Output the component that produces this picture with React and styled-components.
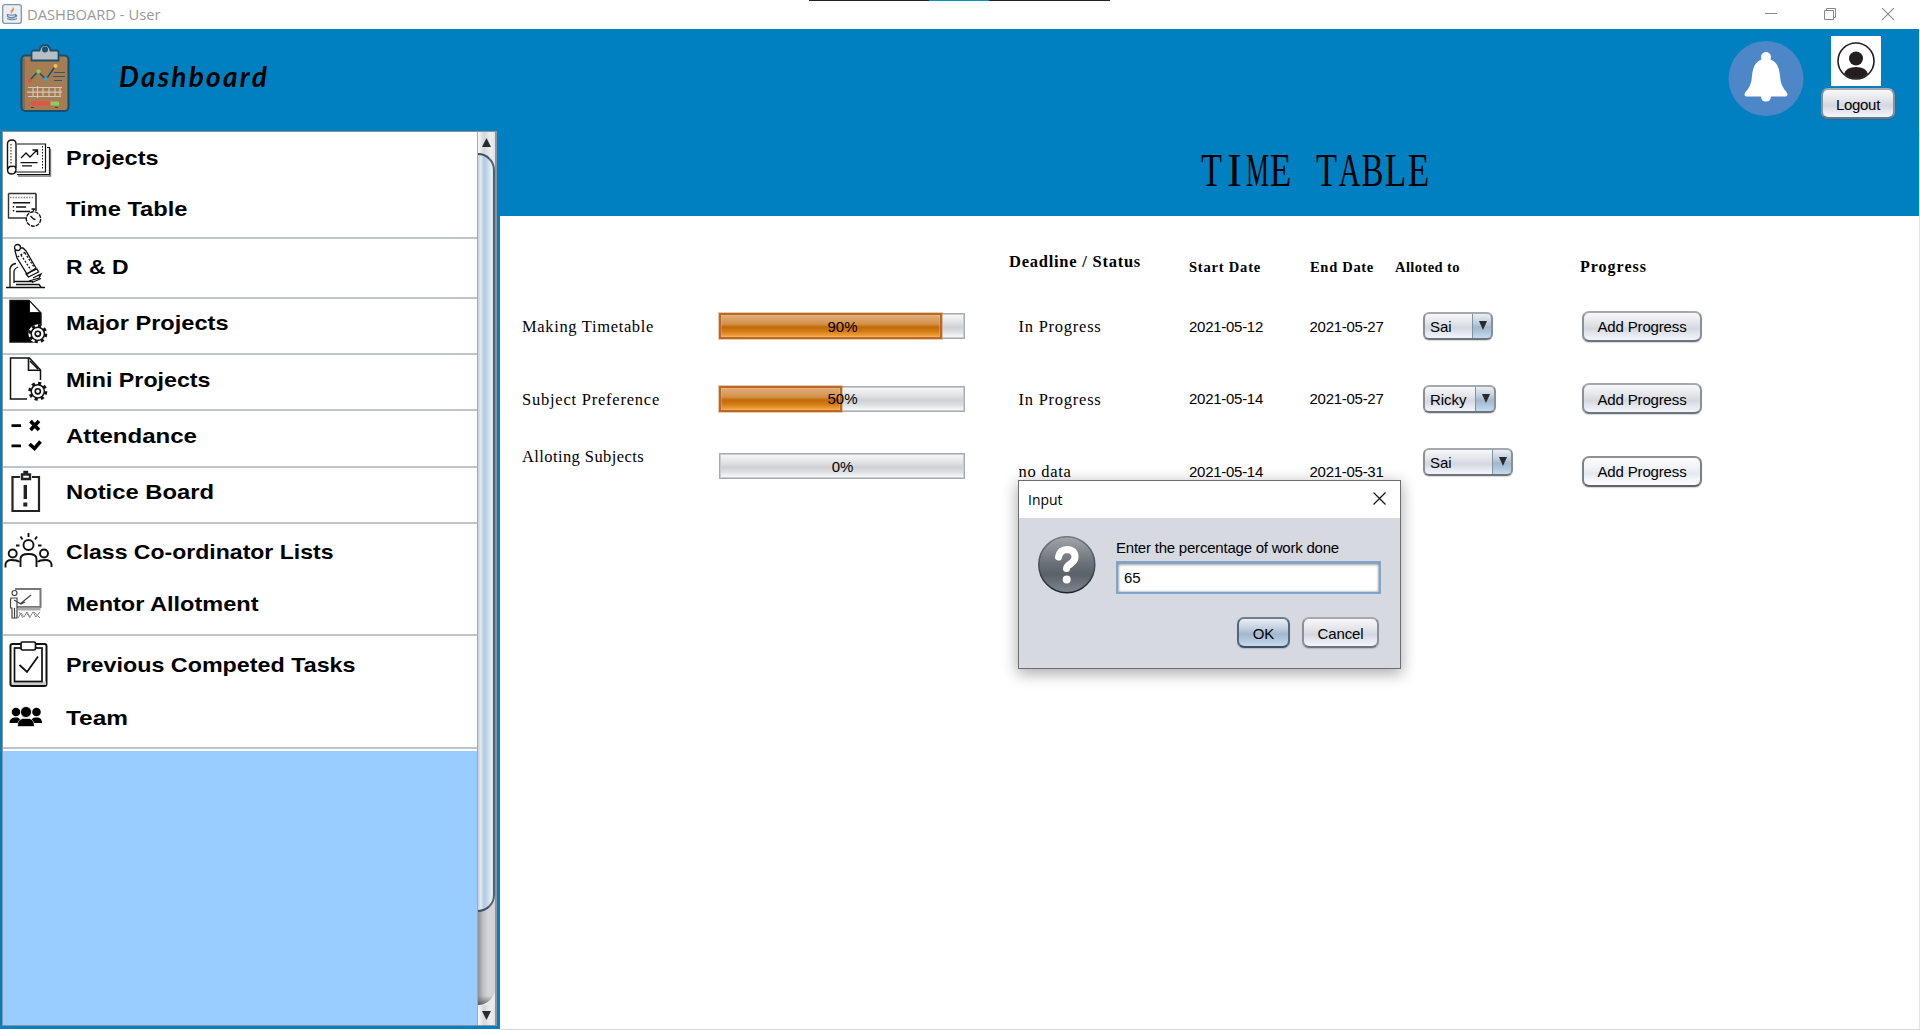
import React, { useLayoutEffect, useRef } from "react";
import styled, { createGlobalStyle, css } from "styled-components";

const Global = createGlobalStyle`
  * { box-sizing: border-box; }
  body { margin: 0; background: #fff; overflow: hidden; }
`;

const SANS = '"Liberation Sans", Arial, sans-serif';
const SERIF = '"Liberation Serif", "Times New Roman", serif';
const UI = '"Open Sans", "Noto Sans", sans-serif';

/* A label that fills a fixed width, by tracking or by stretching its glyphs. */
const FitBox = styled.span`
  display: block;
  flex: none;
  width: ${(p) => p.$w}px;
  white-space: pre;
`;
const FitText = styled.span`
  display: inline-block;
  transform-origin: 0 50%;
`;
function Fit({ w, stretch, children }) {
  const ref = useRef(null);
  useLayoutEffect(() => {
    const el = ref.current;
    el.style.letterSpacing = "0px";
    el.style.transform = "none";
    const natural = el.getBoundingClientRect().width;
    if (stretch) el.style.transform = `scaleX(${w / natural})`;
    else el.style.letterSpacing = `${(w - natural) / children.length}px`;
  }, [w, stretch, children]);
  return (
    <FitBox $w={w}>
      <FitText ref={ref}>{children}</FitText>
    </FitBox>
  );
}

const Window = styled.div`
  position: relative;
  width: 1920px;
  height: 1030px;
  display: flex;
  flex-direction: column;
  overflow: hidden;
  background: #fff;
  color: #000;
  font-family: ${SANS};
  font-size: 15px;
`;

/* Title bar */
const TitleBar = styled.header`
  flex: none;
  height: 29px;
  display: flex;
  align-items: center;
  padding: 0 26px 2px 2px;
  color: #999;
  font: 15px/20px ${UI};
`;
const TitleText = styled.div`
  margin-left: 5px;
  flex: 1;
`;
const WindowButtons = styled.div`
  display: flex;
  gap: 46.5px;
  align-items: center;
`;
const TopStrip = styled.div`
  position: absolute;
  top: 0;
  left: 809px;
  width: 301px;
  height: 1px;
  background: linear-gradient(90deg, #222 120px, #0099bc 120px, #0099bc 180px, #222 180px);
`;

/* Blue header */
const Banner = styled.div`
  flex: none;
  height: 102px;
  margin-right: 1px;
  display: flex;
  background: #0080c0;
`;
const Brand = styled.div`
  flex: 1;
  display: flex;
  padding: 14px 0 0 17px;
`;
const BrandName = styled.h1`
  margin: 14px 0 0 48px;
  font: italic 700 28px/38px Lato, sans-serif;
`;
const Bell = styled.div`
  padding-top: 12px;
`;
const Account = styled.div`
  display: flex;
  flex-direction: column;
  align-items: flex-start;
  gap: 2px;
  padding: 7px 24px 0 17px;
`;
const AvatarSlot = styled.div`
  height: 50px;
  margin-left: 10px;
`;

/* Nimbus style controls */
const gray = css`
  background: linear-gradient(#f7f8fa 0, #e4e6ea 35%, #d4d7dd 58%, #e2e5eb 75%, #f2f5fb 100%);
  border-color: #a5a9af #8b9098 #6e747c;
`;
const light = css`
  background: linear-gradient(#fdfdfe 0, #f1f3f6 35%, #e5e8ee 58%, #f0f3f8 75%, #fcfdff 100%);
  border-color: #8c9096 #7b8088 #5e646c;
`;
const blue = css`
  background: linear-gradient(#e9eff5 0, #c1cfde 35%, #a3b8cd 56%, #afc5da 75%, #c4dbf0 100%);
  border-color: #6d7c8b #52667c #3c4f65;
`;
const Button = styled.button`
  flex: none;
  width: ${(p) => p.$w}px;
  height: 31px;
  display: flex;
  align-items: center;
  justify-content: center;
  border: 2px solid;
  border-radius: 7px;
  color: #000;
  font: 15px/20px ${SANS};
  padding: 2px 0 0;
  box-shadow: 0 1px 1px rgba(60, 70, 90, 0.22);
  ${(p) => (p.$tone === "blue" ? blue : p.$tone === "light" ? light : gray)}
`;

/* Body */
const Body = styled.div`
  flex: 1;
  display: flex;
  min-height: 0;
`;
const Sidebar = styled.aside`
  flex: none;
  width: 500px;
  padding: 0 3px 3px 2px;
  background: #0080c0;
  height: 898px;
`;
const ScrollPane = styled.div`
  height: 895px;
  display: flex;
  border: 1px solid #8d939d;
  border-right-width: 2px;
`;
const Menu = styled.nav`
  width: 474px;
  background: #99ccff;
`;
const Section = styled.div`
  height: ${(p) => p.$h}px;
  background: #fff;
  border-bottom: 2px solid #bfc4ca;
`;
const MenuEnd = styled.div`
  height: 2px;
  background: #fff;
`;
const Item = styled.a`
  display: flex;
  align-items: center;
  gap: 11.4px;
  height: ${(p) => p.$h}px;
  font: 700 21px/24px ${SANS};
`;
const IconSvg = styled.svg`
  flex: none;
  width: 52px;
  height: 48px;
  overflow: visible;
  fill: none;
  stroke: #111;
  stroke-width: 1.4;
`;

/* Scroll bar */
const ScrollBar = styled.div`
  flex: 1;
  display: flex;
  flex-direction: column;
  border-left: 1px solid #a4a9b2;
  background: linear-gradient(90deg, #9b9ca2, #c4c5cb 30%, #d4d5da 60%, #d2d3d8);
`;
const Arrow = styled.div`
  height: ${(p) => p.$h}px;
  display: flex;
  justify-content: center;
  align-items: ${(p) => (p.$down ? "flex-end" : "flex-start")};
  padding: ${(p) => (p.$down ? "0 0 5px" : "6px 0 0")};
  background: linear-gradient(90deg, #fafafb, #d4d6d9 35%, #eceef0 75%, #e0e3e6);
`;
const ThumbWell = styled.div`
  background: linear-gradient(90deg, #ececef, #d4d6d9 35%, #eceef0 75%, #e0e3e6) top / 100% 20px no-repeat;
`;
const Thumb = styled.div`
  height: 759px;
  border: solid #3e5063;
  border-width: 2px 2px 2px 0;
  border-right-color: #53626c;
  border-radius: 0 17px 17px 0;
  background: linear-gradient(90deg, #c5cfda, #e3ebf3 18%, #b3c8df 40%, #c5d7e8 62%, #e0f1fb 88%, #d2e4ea);
`;
const TrackRest = styled.div`
  flex: 1;
  display: flex;
  align-items: flex-end;
  background: linear-gradient(#e8eaec, #e8eaec) bottom / 100% 12px no-repeat;
`;
const TrackEnd = styled.div`
  flex: 1;
  height: 100%;
  border-radius: 0 0 17px 0;
  background:
    linear-gradient(transparent, rgba(70, 70, 75, 0.75)) left bottom / 100% 9px no-repeat,
    linear-gradient(90deg, #8e8f94, #bfc0c6 30%, #d4d5da 60%, #d2d3d8);
`;

/* Main area */
const Main = styled.main`
  flex: 1;
  display: flex;
  flex-direction: column;
  border-bottom: 1px solid #d6d9df;
  border-right: 1px solid #e2e4e8;
`;
const PageTitle = styled.h2`
  flex: none;
  height: 85px;
  margin: 0;
  padding: 12px 0 0 700px;
  display: flex;
  background: #0080c0;
  font: 400 47px/55px ${SERIF};
  white-space: pre;
`;
const Letter = styled.span`
  width: 23px;
  display: flex;
  justify-content: center;
  transform: scaleX(${(p) => p.$k});
`;
const Row = styled.div`
  display: grid;
  grid-template-columns: 218px 300px 171px 120.5px 113.5px 159px 1fr;
  height: ${(p) => p.$h}px;
`;
const Cell = styled.div`
  display: flex;
  align-items: center;
  padding: ${(p) => (p.$serif && !p.$up ? 2 : 0)}px 0 ${(p) => (p.$up || 0) * 2}px ${(p) => p.$in || 0}px;
  font-family: ${(p) => (p.$serif ? SERIF : SANS)};
  font-size: ${(p) => (p.$serif ? 16.5 : 15)}px;
  line-height: 20px;
`;
const DateCell = styled(Cell)`
  padding-top: 1px;
`;
const Heads = styled.div`
  display: flex;
  height: 74px;
  padding-left: 509px;
  align-items: flex-start;
`;
const Head = styled.div`
  width: ${(p) => p.$w}px;
  padding-top: ${(p) => p.$top}px;
  font: 700 ${(p) => p.$size}px/20px ${SERIF};
`;
const Bar = styled.div`
  display: grid;
  width: 246px;
  height: 26px;
  border: 1px solid #a9abb3;
  box-shadow: inset 0 0 0 1px #c9cbd2;
  background: linear-gradient(#fafafa 0, #dfe0e3 38%, #cfd0d4 55%, #dddfe2 75%, #f3f4f6 92%, #fff 100%);
`;
const Fill = styled.div`
  grid-area: 1 / 1;
  margin: -1px;
  border: 2px solid #b9682c;
  box-shadow: 0 0 0 1px rgba(205, 120, 50, 0.4), inset 0 0 0 1px rgba(255, 190, 110, 0.35);
  background: linear-gradient(#e0ae7c 0, #d4924c 40%, #c26a05 55%, #d47d18 75%, #f9a941 100%);
`;
const BarText = styled.span`
  grid-area: 1 / 1;
  place-self: center;
  padding: 1px 0 0 1px;
`;
const Select = styled.div`
  width: ${(p) => p.$w}px;
  height: 28px;
  display: flex;
  border: 2px solid;
  border-radius: 6px;
  overflow: hidden;
  box-shadow: 0 1px 1px rgba(60, 70, 90, 0.2);
  ${gray}
`;
const SelectValue = styled.div`
  flex: 1;
  padding: 3px 0 0 5px;
`;
const SelectArrow = styled.div`
  width: 21px;
  margin: -2px -2px -2px 0;
  padding: 7px 0 0 6px;
  border: solid;
  border-width: 2px 2px 2px 1px;
  border-radius: 0 6px 6px 0;
  line-height: 0;
  ${blue}
  border-left-color: #8093a6;
`;

/* Dialog */
const Dialog = styled.div`
  position: absolute;
  left: 1018px;
  top: 480px;
  width: 383px;
  height: 189px;
  border: 1px solid #6e6e6e;
  background: #d6d9e0;
  box-shadow: 0 4px 14px 1px rgba(0, 0, 0, 0.32);
`;
const DialogTitle = styled.div`
  height: 37px;
  display: flex;
  justify-content: space-between;
  align-items: center;
  padding: 0 14px 2px 9px;
  background: #fff;
  font: 15px/20px ${UI};
`;
const DialogBody = styled.div`
  display: flex;
  gap: 20px;
  padding: 18px 19px 0 19px;
`;
const Prompt = styled.div`
  padding-top: 2px;
  line-height: 20px;
`;
const Input = styled.div`
  width: 265px;
  height: 33px;
  margin-top: 3px;
  padding: 6px 0 0 6px;
  border: 2px solid #77a3cd;
  outline: 1px solid rgba(140, 175, 210, 0.45);
  outline-offset: -1px;
  background: #fff;
  box-shadow: inset 0 2px 3px rgba(60, 60, 70, 0.4), inset 0 0 2px 1px rgba(90, 100, 120, 0.35);
`;
const DialogButtons = styled.div`
  display: flex;
  gap: 12px;
  justify-content: flex-end;
  padding: 23px 21px 0 0;
`;

const Gear = ({ x, y }) => (
  <g>
    <circle cx={x} cy={y} r="9.5" fill="#fff" stroke="none" />
    <circle cx={x} cy={y} r="8" stroke="#111" strokeWidth="3" strokeDasharray="3.1 3.183" />
    <circle cx={x} cy={y} r="6.6" fill="#fff" stroke="#111" strokeWidth="1.5" />
    <circle cx={x} cy={y} r="2.6" strokeWidth="1.6" />
  </g>
);

const icons = {
  projects: (
    <>
      <path d="M14 40.500H46.500V13.500H44M11 38H42.500V10H14" strokeWidth="1.200" />
      <path d="M15 42H47.500V15" stroke="#777" />
      <path d="M4.500 32V10q0-4 4.500-4q4 0 4 4V34M4.500 32v4q0 4 4.500 4q4 0 4-5q-1-4-4-2.500q-3-1-4.500 3.500" />
      <path d="M8 10V30M39.500 12V36" strokeDasharray="1.500 1.500" strokeWidth="1" />
      <path d="M18 24l5-5l4 4l7-7M29.500 16h5v5" />
      <path d="M17.500 28.700H34.500M19 31.800H29" strokeWidth="1.300" />
    </>
  ),
  timetable: (
    <>
      <path d="M5.500 8.500V33H25M33 8.500H5.500" stroke="#333" />
      <path d="M33 8.500V26" />
      <path d="M7 12.500H31" strokeDasharray="1.500 1.200" stroke="#888" />
      <path d="M11 17.800H27M13 22H23M13 26.500H27" strokeWidth="1.500" />
      <path d="M10.500 17v10" strokeDasharray="1.500 2.500" />
      <circle cx="30.500" cy="34" r="7.200" fill="#fff" strokeDasharray="4 1" />
      <path d="M30.500 34l-3-3M30.500 34l2 .5M30.500 26v-2M28.500 24h4" />
    </>
  ),
  microscope: (
    <g strokeWidth="1.300">
      <path d="M3 44.500H42M7 44V26q1-5 6-5.500M11 40V28q1-3 4-4M11 38.500H30M13 41.500H36L38 44" />
      <path d="M12 8l3-3h5l3 3L33 25l-9 6L14 15z" />
      <path d="M18 12L28 27M22 10L31 24M14.500 14l8-5" strokeDasharray="2 1.500" />
      <circle cx="14.500" cy="4.500" r="3" fill="#fff" />
      <path d="M23 31l11-5l1.500 3l-10 5zM26 38l10-3l2-4l-8 4M29 39.500l9-4" />
    </g>
  ),
  major: (
    <>
      <path d="M7 1.500H26L38 14V43H7z" fill="#000" />
      <path d="M26.500 2V13.500H37z" fill="#fff" strokeWidth="1" />
      <Gear x={34.8} y={34.8} />
    </>
  ),
  mini: (
    <>
      <path d="M24 43H7.500V2H26.500L37.500 14V24" strokeWidth="1.500" />
      <path d="M25.500 2V14.200H37.500M27 5L35 13" strokeWidth="1.600" />
      <Gear x={34.8} y={35.3} />
    </>
  ),
  attendance: (
    <g stroke="#000">
      <path d="M8.500 13.700H18M8.500 33.800H18" strokeWidth="2.800" />
      <path d="M27.500 9l8.500 9M36 9l-8.500 9M26.500 32l5 4.500l6-7" strokeWidth="3.600" />
    </g>
  ),
  notice: (
    <g stroke="#222">
      <path d="M17 9H9.500V43H36V9H29" strokeWidth="2.200" />
      <path d="M19 11V6.500h2.500V4h2.500v2.500H27V11z" strokeWidth="2.400" />
      <path d="M22.300 17V31" strokeWidth="3.400" />
      <path d="M22.300 34.500V38.500" strokeWidth="4" />
    </g>
  ),
  coordinator: (
    <g strokeWidth="1.900">
      <circle cx="25.500" cy="17" r="5" />
      <circle cx="9.700" cy="25.500" r="4" />
      <circle cx="41" cy="25.500" r="4" />
      <path d="M17.500 39V31q0-5 8-5t8 5v8M2.500 39.500V36q1-4 6-4q6 0 7.500 2M48.500 39V36q-1-4-6-4q-6 0-7.500 2" />
      <path d="M25.500 5v4M17.500 8.500l2 3M34 8.500l-2 3M13 17.500h3.500M35 17.500h3.500" />
    </g>
  ),
  mentor: (
    <g stroke="#444" strokeWidth="1.200">
      <path d="M12 9H37.500V27H14" stroke="#777" strokeWidth="2" />
      <path d="M17 24l11-9M11 20l7 4l4-2" />
      <circle cx="11.500" cy="13" r="2.500" />
      <path d="M8 18h6v20H9V28H7.500V20zM11.500 28v10" />
      <path d="M15 29H37.500" stroke="#aaa" strokeWidth="3" />
      <path d="M15 38l3-5l3 4l3-5l3 5l3-5l3 5l4-5M16 32l4 6M23 32l4 6M31 32l6 6" stroke="#888" strokeWidth="1" />
    </g>
  ),
  tasks: (
    <>
      <rect x="7.500" y="3" width="36" height="42" rx="2" fill="#fff" strokeWidth="2" />
      <path d="M9 43H42V41.500H11" stroke="#ccc" strokeWidth="2.200" />
      <rect x="11.500" y="7" width="27.500" height="33.500" strokeWidth="1.700" />
      <rect x="18" y="1" width="14.500" height="8" rx="1.500" fill="#fff" strokeWidth="1.700" />
      <path d="M16.500 24l7.500 7L35 15.500" strokeWidth="1.800" />
    </>
  ),
  team: (
    <g fill="#000" stroke="none">
      <circle cx="13" cy="18" r="4.300" />
      <circle cx="33.500" cy="18" r="4.300" />
      <path d="M6.500 29q0-5 5-5.500h3q3 1 4 5.500zM28 29q0-5 4-5.500h3q4 .5 4 5.500z" />
      <circle cx="23" cy="18" r="5.500" stroke="#fff" strokeWidth=".8" />
      <path d="M14.500 32.500q0-7 5-8h7q4.500 1 5 8z" stroke="#fff" strokeWidth=".6" />
    </g>
  ),
};

const sections = [
  { h: 107, items: [["projects", "Projects", 52, 92.5], ["timetable", "Time Table", 50, 121.5]] },
  { h: 60, items: [["microscope", "R & D", 56, 62.5]] },
  { h: 56, items: [["major", "Major Projects", 48, 162.5]] },
  { h: 56, items: [["mini", "Mini Projects", 49, 144.5]] },
  { h: 57, items: [["attendance", "Attendance", 50, 131]] },
  { h: 56, items: [["notice", "Notice Board", 48, 148]] },
  { h: 112, items: [["coordinator", "Class Co-ordinator Lists", 56, 267.5], ["mentor", "Mentor Allotment", 48, 192.5]] },
  { h: 113, items: [["tasks", "Previous Competed Tasks", 57, 289.5], ["team", "Team", 49, 62]] },
];

const rows = [
  { h: 72, task: "Making Timetable", tw: 132, pct: 90, status: "In Progress", sw: 83, start: "2021-05-12", end: "2021-05-27", who: "Sai", cw: 70 },
  { h: 73, task: "Subject Preference", tw: 138, pct: 50, status: "In Progress", sw: 83, start: "2021-05-14", end: "2021-05-27", who: "Ricky", cw: 73 },
  { h: 72, task: "Alloting Subjects", tw: 122, pct: 0, status: "no data", sw: 53, start: "2021-05-14", end: "2021-05-31", who: "Sai", cw: 90, taskUp: 14, barUp: 5, selUp: 9, tone: "light" },
];

const nameWidth = { Sai: 21.5, Ricky: 36.5 };

const title = [["T", 0.73], ["I", 0.92], ["M", 0.55], ["E", 0.75], [" ", 1], ["T", 0.73], ["A", 0.64], ["B", 0.7], ["L", 0.75], ["E", 0.75]];

const JavaIcon = () => (
  <svg width="20" height="20" viewBox="0 0 20 20">
    <rect x=".7" y=".7" width="18.600" height="18.600" rx="2" fill="#e9eff4" stroke="#8197ab" strokeWidth="1.300" />
    <path d="M10 10q-3-2.500 0-4.500q1-1 .5-2.500q3 2 .5 4q-1.500 1.500-1 3" fill="#ef8d3c" />
    <path d="M5.500 10.500q4 1.500 8 0v2q-4 2-8 0zM13.500 11q2.500 0 0 2M5 14.500q5 2.500 10 0M6.500 13.500q3 1 6 0" fill="none" stroke="#5f86a8" strokeWidth="1.200" />
  </svg>
);

const Clipboard = () => (
  <svg width="54" height="72" viewBox="0 0 54 72">
    <rect x="4.500" y="12.500" width="47" height="55.500" rx="4" fill="#a67c52" stroke="#17506f" strokeWidth="2.200" />
    <path d="M7 15V66" stroke="#8d6a4b" strokeWidth="2" />
    <path d="M14.500 17.500V9.500q0-2 2-2h6q1-5.500 5.500-5.500T33.500 7.500h6q2 0 2 2v8z" fill="#b9bec5" stroke="#17506f" strokeWidth="1.800" />
    <circle cx="28" cy="6.500" r="3" fill="#17506f" />
    <path d="M13 37l8-8.500l8 8l9-13" fill="none" stroke="#1f4f70" strokeWidth="1.500" />
    <circle cx="13" cy="37.500" r="2" fill="#e84c4c" />
    <circle cx="21.500" cy="28.500" r="2.200" fill="#8cc95c" />
    <circle cx="29" cy="36" r="2" fill="#3fa2df" />
    <circle cx="38.500" cy="23" r="2" fill="#f6c14b" />
    <path d="M37 29.500H48M36 33.500H48M37 37.500H45" stroke="#2c5873" strokeWidth="1.200" />
    <path d="M11 44.500H45M10 49.200H45M11 53.500H44M16 44v10M20.500 43v12M26 44v10M32 44v10M38 44v10M43 44v10" stroke="#d0c6ba" strokeWidth="1.200" />
    <rect x="13.500" y="58.500" width="20" height="4" fill="#e8504c" />
    <rect x="33.500" y="58.500" width="8.500" height="4" fill="#93c863" />
    <path d="M14 64.500h3M38 64.500h3" stroke="#17506f" strokeWidth="1.200" />
  </svg>
);

const BellIcon = () => (
  <svg width="76" height="76" viewBox="0 0 76 76">
    <circle cx="38" cy="37.500" r="37.500" fill="#4d87c7" />
    <circle cx="38" cy="16" r="5" fill="#fff" />
    <path d="M38 17q13 2 14 18q.5 10 6.500 16q2.500 4-1 4.500h-39q-3.500-.5-1-4.500q6-6 6.500-16q1-16 14-18z" fill="#fff" />
    <path d="M33 55h10q0 5.500-5 5.500t-5-5.500z" fill="#fff" />
  </svg>
);

const Avatar = () => (
  <svg width="50" height="50" viewBox="0 0 50 50">
    <defs>
      <clipPath id="ring"><circle cx="25" cy="25" r="17.500" /></clipPath>
    </defs>
    <rect width="50" height="50" fill="#fff" />
    <g clipPath="url(#ring)" fill="#231f20">
      <circle cx="25" cy="22.500" r="7" />
      <path d="M13 45V38q2-7 12-7t12 7v7z" />
    </g>
    <circle cx="25" cy="25" r="18" fill="none" stroke="#231f20" strokeWidth="1.600" />
  </svg>
);

const Question = () => (
  <svg width="58" height="58" viewBox="0 0 58 58">
    <defs>
      <linearGradient id="ball" x1="0" y1="0" x2="0" y2="1">
        <stop offset="0" stopColor="#a3a6aa" />
        <stop offset=".5" stopColor="#686e75" />
        <stop offset=".68" stopColor="#5a6169" />
        <stop offset="1" stopColor="#7d868f" />
      </linearGradient>
      <linearGradient id="rim" x1="0" y1="0" x2="0" y2="1">
        <stop offset="0" stopColor="#777b80" />
        <stop offset="1" stopColor="#1c242c" />
      </linearGradient>
    </defs>
    <circle cx="28.800" cy="28.700" r="28" fill="url(#ball)" stroke="url(#rim)" strokeWidth="1.500" />
    <path d="M20.500 21q1.500-7.500 8.500-7.500q8 .5 8 7.500q0 3.500-4 6.500q-4.500 3-4.500 5" fill="none" stroke="#fff" strokeWidth="7" strokeLinecap="round" strokeLinejoin="round" />
    <circle cx="28.700" cy="43.500" r="4" fill="#fff" />
  </svg>
);

const Triangle = ({ up, w = 9, h = 9 }) => (
  <svg width={w} height={h} viewBox="0 0 10 10" preserveAspectRatio="none">
    <path d={up ? "M5 0L10 10H0z" : "M0 0H10L5 10z"} fill="#2a2a2d" />
  </svg>
);

export default function App() {
  return (
    <Window>
      <Global />
      <TitleBar>
        <JavaIcon />
        <TitleText><Fit w={133.5} stretch>DASHBOARD - User</Fit></TitleText>
        <WindowButtons>
          <svg width="12" height="12"><path d="M0 5.500H12" stroke="#888" /></svg>
          <svg width="12" height="12" fill="none" stroke="#888"><path d="M.5 2.500H9.500V11.500H.5zM2.500 2.500V.5H11.500V9.500H9.500" /></svg>
          <svg width="12" height="12"><path d="M0 0L12 12M12 0L0 12" stroke="#888" strokeWidth="1.100" /></svg>
        </WindowButtons>
      </TitleBar>
      <TopStrip />
      <Banner>
        <Brand>
          <Clipboard />
          <BrandName><Fit w={150}>Dashboard</Fit></BrandName>
        </Brand>
        <Bell><BellIcon /></Bell>
        <Account>
          <AvatarSlot><Avatar /></AvatarSlot>
          <Button $w={74}><Fit w={44}>Logout</Fit></Button>
        </Account>
      </Banner>
      <Body>
        <Sidebar>
          <ScrollPane>
            <Menu>
              {sections.map((s) => (
                <Section key={s.items[0][0]} $h={s.h}>
                  {s.items.map(([icon, label, h, w]) => (
                    <Item key={icon} $h={h}>
                      <IconSvg viewBox="0 0 52 48">{icons[icon]}</IconSvg>
                      <Fit w={w} stretch>{label}</Fit>
                    </Item>
                  ))}
                </Section>
              ))}
              <MenuEnd />
            </Menu>
            <ScrollBar>
              <Arrow $h={21}><Triangle up /></Arrow>
              <ThumbWell><Thumb /></ThumbWell>
              <TrackRest><TrackEnd /></TrackRest>
              <Arrow $h={20} $down><Triangle /></Arrow>
            </ScrollBar>
          </ScrollPane>
        </Sidebar>
        <Main>
          <PageTitle>
            {title.map(([c, k], i) => <Letter key={i} $k={k}>{c}</Letter>)}
          </PageTitle>
          <Heads>
            <Head $w={180} $top={36} $size={16.5}><Fit w={132}>Deadline / Status</Fit></Head>
            <Head $w={121} $top={41} $size={14.5}><Fit w={72}>Start Date</Fit></Head>
            <Head $w={85} $top={41} $size={14.5}><Fit w={64}>End Date</Fit></Head>
            <Head $w={185} $top={41} $size={14.5}><Fit w={65}>Alloted to</Fit></Head>
            <Head $w={100} $top={41} $size={16}><Fit w={67}>Progress</Fit></Head>
          </Heads>
          {rows.map((r) => (
            <Row key={r.task} $h={r.h}>
              <Cell $serif $in={22} $up={r.taskUp}><Fit w={r.tw}>{r.task}</Fit></Cell>
              <Cell $in={1} $up={r.barUp}>
                <Bar>
                  {r.pct > 0 && <Fill style={{ width: `${r.pct === 100 ? 246 : r.pct * 2.5 - 2}px` }} />}
                  <BarText>{r.pct}%</BarText>
                </Bar>
              </Cell>
              <Cell $serif $in={0.5}><Fit w={r.sw}>{r.status}</Fit></Cell>
              <DateCell><Fit w={74}>{r.start}</Fit></DateCell>
              <DateCell><Fit w={74}>{r.end}</Fit></DateCell>
              <Cell $up={r.selUp}>
                <Select $w={r.cw}>
                  <SelectValue><Fit w={nameWidth[r.who]}>{r.who}</Fit></SelectValue>
                  <SelectArrow><Triangle w={8} h={9} /></SelectArrow>
                </Select>
              </Cell>
              <Cell>
                <Button $w={120} $tone={r.tone}><Fit w={89}>Add Progress</Fit></Button>
              </Cell>
            </Row>
          ))}
        </Main>
      </Body>
      <Dialog>
        <DialogTitle>
          <Fit w={34.5} stretch>Input</Fit>
          <svg width="13" height="13"><path d="M.5 .5L12.500 12.500M12.500 .5L.5 12.500" stroke="#111" strokeWidth="1.200" /></svg>
        </DialogTitle>
        <DialogBody>
          <Question />
          <div>
            <Prompt><Fit w={223}>Enter the percentage of work done</Fit></Prompt>
            <Input>65</Input>
          </div>
        </DialogBody>
        <DialogButtons>
          <Button $w={53} $tone="blue">OK</Button>
          <Button $w={77}><Fit w={46}>Cancel</Fit></Button>
        </DialogButtons>
      </Dialog>
    </Window>
  );
}
